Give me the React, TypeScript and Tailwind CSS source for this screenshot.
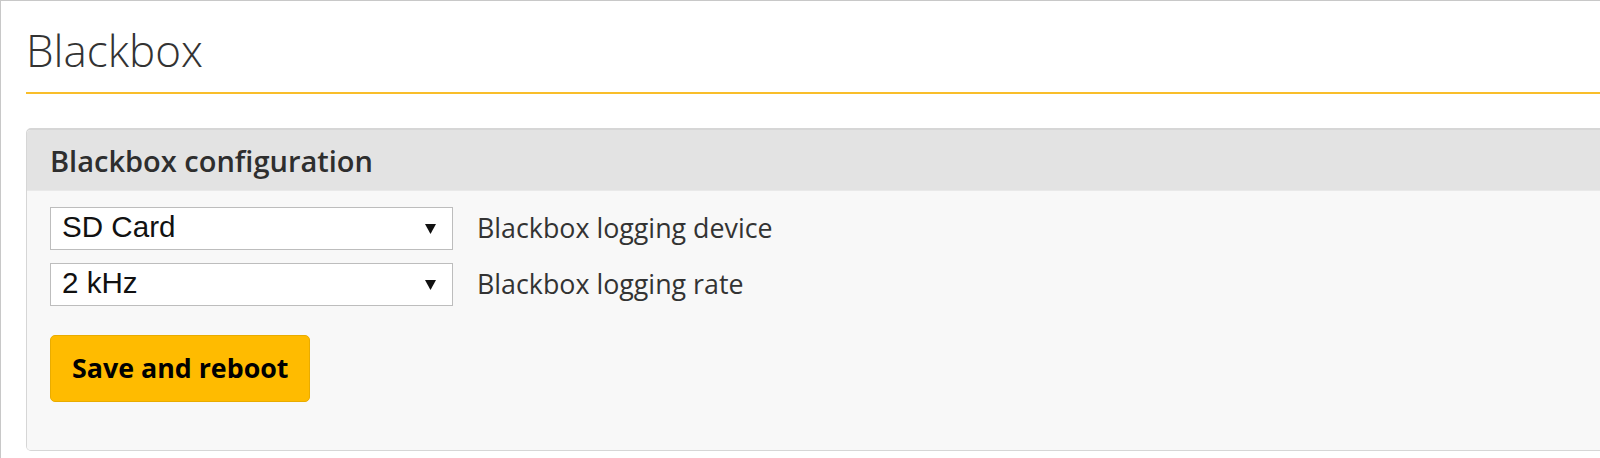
import React from "react";

const Arrow = () => (
  <svg width="11" height="10" viewBox="0 0 11 10" className="shrink-0">
    <polygon points="0,0 11,0 5.5,10" fill="#111" />
  </svg>
);

const SelectBox = ({ value }: { value: string }) => (
  <div className="flex h-[43px] w-[403px] shrink-0 items-center justify-between border border-[#bdbdbd] bg-white pl-[11px] pr-[16px]">
    <span
      className="pb-[3px] text-[29.6px] leading-none text-[#111]"
      style={{ fontFamily: '"Liberation Sans", Arial, sans-serif' }}
    >
      {value}
    </span>
    <Arrow />
  </div>
);

const Row = ({ value, label }: { value: string; label: string }) => (
  <div className="flex items-center gap-[24px]">
    <SelectBox value={value} />
    <span className="text-[26.8px] leading-none text-[#333]">{label}</span>
  </div>
);

export default function App() {
  return (
    <div
      className="h-[458px] w-[1600px] overflow-hidden border-l border-t border-[#c8c8c8] bg-white"
      style={{ fontFamily: '"Open Sans", "Noto Sans", sans-serif' }}
    >
      <div className="-mr-[10px] pl-[25px]">
        <h1 className="mt-[27px] border-b-2 border-[#f9be2a] pb-[20px] text-[44px] font-light leading-[44px] text-[#333]">
          Blackbox
        </h1>
        <div className="mt-[34px] overflow-hidden rounded-[5px] border border-t-2 border-[#d6d6d6]">
          <div className="flex h-[61px] items-center border-b border-[#e9e9e9] bg-[#e3e3e3] pl-[23px]">
            <span className="text-[29px] font-semibold leading-none text-[#2e2e2e]">
              Blackbox configuration
            </span>
          </div>
          <div className="flex flex-col bg-[#f8f8f8] pb-[48px] pl-[23px] pt-[16px]">
            <div className="flex flex-col gap-[13px]">
              <Row value="SD Card" label="Blackbox logging device" />
              <Row value="2 kHz" label="Blackbox logging rate" />
            </div>
            <div className="mt-[29px]">
              <button className="flex h-[67px] w-[260px] items-center rounded-[5px] border border-[#e9ac00] bg-[#ffbb00] pl-[21px] text-[26.8px] font-bold leading-none text-black">
                Save and reboot
              </button>
            </div>
          </div>
        </div>
      </div>
    </div>
  );
}
